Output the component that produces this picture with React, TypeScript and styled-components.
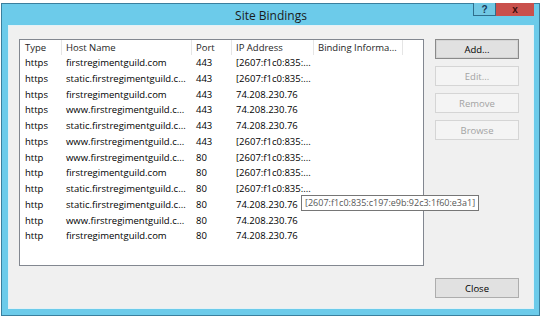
import React from 'react';
import styled, { createGlobalStyle } from 'styled-components';

const GlobalStyle = createGlobalStyle`
  html, body {
    margin: 0;
    padding: 0;
    background: #ffffff;
  }
  body {
    font-family: 'Open Sans', 'Noto Sans', sans-serif;
    font-size: 9.5px;
    color: #000;
  }
`;

interface Binding {
  type: string;
  host: string;
  port: string;
  ip: string;
}

const bindings: Binding[] = [
  { type: 'https', host: 'firstregimentguild.com', port: '443', ip: '[2607:f1c0:835:...' },
  { type: 'https', host: 'static.firstregimentguild.c...', port: '443', ip: '[2607:f1c0:835:...' },
  { type: 'https', host: 'firstregimentguild.com', port: '443', ip: '74.208.230.76' },
  { type: 'https', host: 'www.firstregimentguild.c...', port: '443', ip: '74.208.230.76' },
  { type: 'https', host: 'static.firstregimentguild.c...', port: '443', ip: '74.208.230.76' },
  { type: 'https', host: 'www.firstregimentguild.c...', port: '443', ip: '[2607:f1c0:835:...' },
  { type: 'http', host: 'www.firstregimentguild.c...', port: '80', ip: '[2607:f1c0:835:...' },
  { type: 'http', host: 'firstregimentguild.com', port: '80', ip: '[2607:f1c0:835:...' },
  { type: 'http', host: 'static.firstregimentguild.c...', port: '80', ip: '[2607:f1c0:835:...' },
  { type: 'http', host: 'static.firstregimentguild.c...', port: '80', ip: '74.208.230.76' },
  { type: 'http', host: 'www.firstregimentguild.c...', port: '80', ip: '74.208.230.76' },
  { type: 'http', host: 'firstregimentguild.com', port: '80', ip: '74.208.230.76' },
];

// column widths of the list view, left to right
const COLS = '42px 130px 40px 82px 89px';

export default function App() {
  return (
    <>
      <GlobalStyle />
      <Window>
        <TitleBar>
          <span />
          <Title>Site Bindings</Title>
          <CaptionButtons>
            <HelpButton>?</HelpButton>
            <CloseCaption>x</CloseCaption>
          </CaptionButtons>
        </TitleBar>
        <Client>
          <ListView>
            <HeaderRow>
              <HeaderCell>Type</HeaderCell>
              <HeaderCell>Host Name</HeaderCell>
              <HeaderCell>Port</HeaderCell>
              <HeaderCell>IP Address</HeaderCell>
              <HeaderCell>Binding Informa...</HeaderCell>
            </HeaderRow>
            {bindings.map((b, i) => (
              <Row key={i}>
                <Cell>{b.type}</Cell>
                <Cell>{b.host}</Cell>
                <Cell>{b.port}</Cell>
                <Cell>{b.ip}</Cell>
                <Cell />
              </Row>
            ))}
            <Tooltip>[2607:f1c0:835:c197:e9b:92c3:1f60:e3a1]</Tooltip>
          </ListView>
          <ButtonColumn>
            <DialogButton $default>Add...</DialogButton>
            <DialogButton disabled>Edit...</DialogButton>
            <DialogButton disabled>Remove</DialogButton>
            <DialogButton disabled>Browse</DialogButton>
          </ButtonColumn>
          <Footer>
            <DialogButton>Close</DialogButton>
          </Footer>
        </Client>
      </Window>
    </>
  );
}

const Window = styled.div`
  margin: 3px 0 0 1px;
  width: 539px;
  height: 313px;
  box-sizing: border-box;
  border: 1px solid #3a7f9e;
  background: #6ccbea;
  display: flex;
  flex-direction: column;
  padding: 0 5px 6px 6px;
`;

const TitleBar = styled.div`
  height: 21px;
  display: grid;
  grid-template-columns: 1fr auto 1fr;
  align-items: center;
`;

const Title = styled.div`
  font-family: 'Open Sans', 'Noto Sans', sans-serif;
  font-size: 12px;
  color: #1b1b1b;
  padding-top: 1px;
`;

const CaptionButtons = styled.div`
  justify-self: end;
  align-self: start;
  display: flex;
  margin-top: -1px;
`;

const HelpButton = styled.div`
  width: 21px;
  height: 12px;
  border: 1px solid #2f6e8c;
  border-top: none;
  background: #72c8e4;
  color: #17385a;
  font-family: 'Liberation Sans', Arial, sans-serif;
  font-weight: bold;
  font-size: 10px;
  display: flex;
  align-items: center;
  justify-content: center;
`;

const CloseCaption = styled.div`
  width: 38px;
  height: 13px;
  background: #c9504c;
  color: #3a0d0b;
  font-family: 'Liberation Sans', Arial, sans-serif;
  font-weight: bold;
  font-size: 10px;
  display: flex;
  align-items: center;
  justify-content: center;
`;

const Client = styled.div`
  flex: 1;
  background: #f0f0f0;
  box-sizing: border-box;
  border: 1px solid #e4f1f6;
  padding: 13px 13px 9px 10px;
  display: grid;
  grid-template-columns: 405px 84px;
  grid-template-rows: 227px 20px;
  column-gap: 11px;
  row-gap: 12px;
`;

const ListView = styled.div`
  position: relative;
  box-sizing: border-box;
  border: 1px solid #828790;
  background: #ffffff;
`;

const HeaderRow = styled.div`
  display: grid;
  grid-template-columns: ${COLS};
  height: 15px;
`;

const HeaderCell = styled.div`
  border-right: 1px solid #e5e5e5;
  padding-left: 4px;
  line-height: 15px;
  color: #1e1e1e;
  white-space: nowrap;
  overflow: hidden;
  &:first-child {
    padding-left: 5px;
  }
`;

const Row = styled.div`
  display: grid;
  grid-template-columns: ${COLS};
  height: 15.75px;
  line-height: 15.75px;
`;

const Cell = styled.div`
  padding-left: 4px;
  white-space: nowrap;
  overflow: hidden;
  &:first-child {
    padding-left: 5px;
  }
`;

const Tooltip = styled.div`
  position: absolute;
  left: 281px;
  top: 155px;
  width: 178px;
  height: 16px;
  box-sizing: border-box;
  padding: 0 0 0 3px;
  border: 1px solid #767676;
  background: #ffffff;
  color: #575757;
  font-size: 9px;
  line-height: 14px;
  white-space: nowrap;
  overflow: hidden;
`;

const ButtonColumn = styled.div`
  display: flex;
  flex-direction: column;
  gap: 7px;
`;

const DialogButton = styled.button<{ $default?: boolean }>`
  width: 84px;
  height: 20px;
  box-sizing: border-box;
  font-family: 'Open Sans', 'Noto Sans', sans-serif;
  font-size: 9.5px;
  color: #000;
  background: #e1e1e1;
  border: 1px solid ${({ $default }) => ($default ? '#8a8a8a' : '#adadad')};
  box-shadow: ${({ $default }) => ($default ? 'inset 0 0 0 1px #d4d4d4' : 'none')};
  padding: 0;
  &:disabled {
    background: #f4f4f4;
    border-color: #d5d5d5;
    color: #a3a3a3;
  }
`;

const Footer = styled.div`
  grid-column: 2;
  display: flex;
  justify-content: flex-end;
`;
